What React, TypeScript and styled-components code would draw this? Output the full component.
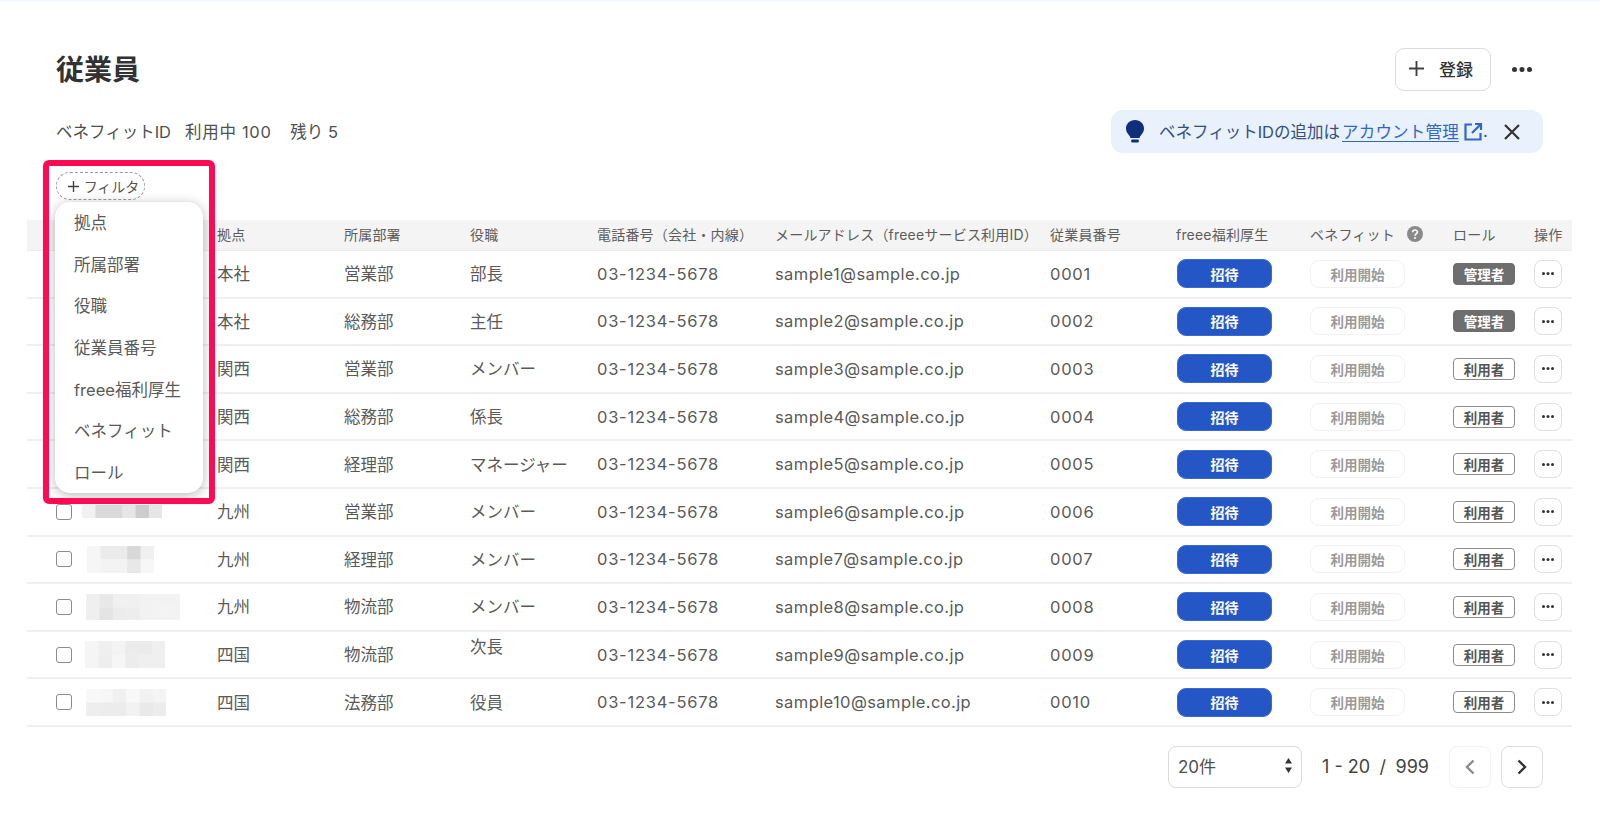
import styled, { createGlobalStyle } from 'styled-components';

const fontStack = '"Inter", "Noto Sans CJK JP", "Noto Sans", sans-serif';

const GlobalStyle = createGlobalStyle`
  html, body {
    margin: 0;
    background: #ffffff;
  }
  body {
    font-family: ${fontStack};
    color: #555555;
  }
`;

const Page = styled.div`
  position: relative;
  width: 1600px;
  height: 834px;
  box-sizing: border-box;
  overflow: hidden;
  border-top: 2px solid #f5f8fc;
`;
const Header = styled.header`
  height: 43px;
  margin-top: 46px;
  padding: 0 68px 0 56px;
  display: flex;
  align-items: center;
  justify-content: space-between;
`;
const Title = styled.h1`
  margin: 0;
  font-size: 28px;
  line-height: 42px;
  font-weight: 700;
  color: #323232;
`;
const HeaderActions = styled.div`
  display: flex;
  align-items: center;
  gap: 21px;
`;
const RegisterButton = styled.button`
  width: 96px;
  height: 43px;
  box-sizing: border-box;
  border: 1px solid #dcdcdc;
  border-radius: 9px;
  background: #ffffff;
  display: flex;
  align-items: center;
  justify-content: center;
  gap: 15px;
  padding: 0 4px 2px 0;
  font: 500 17px ${fontStack};
  color: #323232;
`;
const InfoRow = styled.div`
  margin-top: 19px;
  height: 43px;
  padding: 0 57px 0 56px;
  display: flex;
  align-items: center;
  justify-content: space-between;
`;
const Usage = styled.div`
  display: flex;
  gap: 14px;
  padding-bottom: 2px;
  font-size: 16.5px;
  color: #505050;
  white-space: pre;
`;
const UsageValue = styled.span`
  letter-spacing: 0.7px;
`;
const Banner = styled.div`
  width: 432px;
  height: 43px;
  box-sizing: border-box;
  padding-left: 14px;
  display: flex;
  align-items: center;
  border-radius: 12px;
  background: #e9f1fc;
  font-size: 16.5px;
  color: #34507f;
`;
const BannerText = styled.span`
  margin-left: 14px;
  padding-bottom: 2px;
  display: flex;
  align-items: center;
  white-space: nowrap;
`;
const BannerLink = styled.a`
  margin-left: 2px;
  letter-spacing: 0.2px;
  color: #2f66c8;
  text-decoration: underline;
  text-underline-offset: 3px;
`;
const FilterRow = styled.div`
  margin-top: 19px;
  height: 28px;
  padding-left: 56px;
  display: flex;
`;
const FilterChip = styled.button`
  width: 89px;
  height: 28px;
  box-sizing: border-box;
  padding: 0 0 0 6px;
  border: 1px dashed #9a9a9a;
  border-radius: 14px;
  background: #ffffff;
  display: flex;
  align-items: center;
  justify-content: center;
  gap: 5px;
  font: 400 14px ${fontStack};
  color: #555555;
`;
const Table = styled.div`
  margin: 20px 28px 0 27px;
`;
const columns = '190px 127px 126px 127px 178px 275px 126px 134px 143px 81px 38px';
const HeadRow = styled.div`
  height: 31px;
  padding-bottom: 2px;
  display: grid;
  grid-template-columns: ${columns};
  align-items: center;
  background: #f5f4f4;
  border-bottom: 1px solid #ececec;
  box-sizing: border-box;
  font-size: 14px;
  letter-spacing: 0.2px;
  color: #5c5c5c;
  white-space: nowrap;
`;
const HeadHelp = styled.span`
  display: flex;
  align-items: center;
  gap: 12px;
`;
const Row = styled.div`
  height: 47.6px;
  box-sizing: border-box;
  display: grid;
  grid-template-columns: ${columns};
  align-items: center;
  border-bottom: 2px solid #efefef;
  font-size: 16.5px;
  color: #5a5a5a;
  white-space: nowrap;
`;
const NameCell = styled.div`
  display: flex;
  align-items: center;
  padding-left: 29px;
`;
const Checkbox = styled.span`
  width: 16px;
  height: 16px;
  box-sizing: border-box;
  border: 1.5px solid #8a8a8a;
  border-radius: 3px;
  flex: none;
`;
const Mosaic = styled.svg<{ $left: number }>`
  margin-left: ${(p) => p.$left}px;
  display: block;
`;
const Cell = styled.span<{ $raised?: boolean }>`
  padding-bottom: 1px;
  ${(p) => p.$raised && 'margin-bottom: 17px;'}
`;
const LatinCell = styled.span<{ $track: number }>`
  letter-spacing: ${(p) => p.$track}px;
`;
const Invite = styled.button`
  width: 95px;
  height: 29px;
  margin-left: 1px;
  padding: 0;
  border: 1px solid #3a6bd2;
  border-radius: 9px;
  background: #2457c5;
  color: #ffffff;
  font: 700 14px ${fontStack};
`;
const StartUse = styled.button`
  width: 95px;
  height: 28px;
  padding: 0;
  border: 1px solid #f2f2f2;
  border-radius: 9px;
  background: #ffffff;
  color: #9a9a9a;
  font: 700 13.5px ${fontStack};
`;
const RoleBadge = styled.span<{ $admin: boolean }>`
  width: 62px;
  height: 22px;
  box-sizing: border-box;
  display: flex;
  align-items: center;
  justify-content: center;
  border-radius: 4px;
  border: 1px solid ${(p) => (p.$admin ? '#6e6e6e' : '#8c8c8c')};
  background: ${(p) => (p.$admin ? '#6e6e6e' : '#ffffff')};
  color: ${(p) => (p.$admin ? '#ffffff' : '#555555')};
  font-size: 13.5px;
  font-weight: 700;
`;
const MoreButton = styled.button`
  width: 28px;
  height: 28px;
  padding: 0;
  box-sizing: border-box;
  border: 1px solid #dfdfdf;
  border-radius: 8px;
  background: #ffffff;
  display: flex;
  align-items: center;
  justify-content: center;
`;
const Pager = styled.nav`
  margin-top: 19px;
  padding-right: 57px;
  display: flex;
  justify-content: flex-end;
  align-items: center;
`;
const PerPage = styled.div`
  width: 134px;
  height: 42px;
  box-sizing: border-box;
  padding: 0 9px 2px;
  display: flex;
  align-items: center;
  justify-content: space-between;
  border: 1px solid #dcdada;
  border-radius: 8px;
  font-size: 17px;
  color: #505050;
`;
const PageCount = styled.span`
  width: 107px;
  margin: 0 20px;
  display: flex;
  justify-content: space-between;
  font-size: 18px;
  color: #444444;
  white-space: pre;
`;
const PageButton = styled.button<{ $off?: boolean }>`
  width: 42px;
  height: 42px;
  padding: 0;
  margin-left: ${(p) => (p.$off ? 0 : 10)}px;
  box-sizing: border-box;
  border: 1px solid ${(p) => (p.$off ? '#f3f3f3' : '#dedede')};
  border-radius: 8px;
  background: #ffffff;
  display: flex;
  align-items: center;
  justify-content: center;
`;
const Highlight = styled.div`
  position: absolute;
  left: 43px;
  top: 158px;
  width: 172px;
  height: 344px;
  box-sizing: border-box;
  border: 6px solid #ff0a55;
  border-radius: 6px;
`;
const Menu = styled.ul`
  position: absolute;
  left: 55px;
  top: 200px;
  width: 148px;
  height: 291px;
  margin: 0;
  padding: 9px 0 8px;
  list-style: none;
  box-sizing: border-box;
  display: flex;
  flex-direction: column;
  justify-content: space-between;
  border-radius: 15px;
  background: #ffffff;
  box-shadow: 0 2px 12px rgba(0, 0, 0, 0.28);
`;
const MenuItem = styled.li`
  padding-left: 19px;
  font-size: 16.5px;
  line-height: 24px;
  color: #5a5a5a;
  white-space: nowrap;
`;

const Plus = ({ size, weight }: { size: number; weight: number }) => (
  <svg width={size} height={size} viewBox="0 0 16 16">
    <path d="M8 0v16M0 8h16" stroke="#404040" strokeWidth={weight} fill="none" />
  </svg>
);
const Dots = ({ width }: { width: number }) => (
  <svg width={width} height={width / 4} viewBox="0 0 16 4">
    <circle cx="2" cy="2" r="2" fill="#333333" />
    <circle cx="8" cy="2" r="2" fill="#333333" />
    <circle cx="14" cy="2" r="2" fill="#333333" />
  </svg>
);
const Bulb = () => (
  <svg width="20" height="25" viewBox="0 0 20 25">
    <path
      d="M10 1C4.8 1 1 4.8 1 9.6c0 3 1.4 5 3 6.6.8.8 1.3 1.7 1.4 2.8h9.2c.1-1.1.6-2 1.4-2.8 1.6-1.6 3-3.6 3-6.6C19 4.8 15.2 1 10 1z"
      fill="#0f2f7c"
    />
    <rect x="6.2" y="20.4" width="7.6" height="3" rx="1" fill="#0f2f7c" />
  </svg>
);
const ExternalLink = () => (
  <svg width="20" height="20" viewBox="0 0 20 20" style={{ marginLeft: 4, marginTop: 2 }}>
    <path
      d="M9 2.5H2.5v15h15V11M12 2h6v6M18 2L9 11"
      stroke="#2f66c8"
      strokeWidth="2.2"
      fill="none"
    />
  </svg>
);
const Close = () => (
  <svg width="18" height="18" viewBox="0 0 18 18" style={{ marginLeft: 15 }}>
    <path d="M2 2l14 14M16 2L2 16" stroke="#333333" strokeWidth="2.2" fill="none" />
  </svg>
);
const Help = () => (
  <svg width="16" height="16" viewBox="0 0 16 16">
    <circle cx="8" cy="8" r="8" fill="#8a8a8a" />
    <path
      d="M5.6 6.2C5.7 4.8 6.7 4 8 4s2.4.8 2.4 2.1c0 1.8-2.4 1.9-2.4 3.7"
      stroke="#ffffff"
      strokeWidth="1.6"
      fill="none"
    />
    <circle cx="8" cy="12" r="1" fill="#ffffff" />
  </svg>
);
const SelectArrows = () => (
  <svg width="7" height="15" viewBox="0 0 7 15">
    <path d="M3.5 0L7 5.5H0zM3.5 15L0 9.5h7z" fill="#333333" />
  </svg>
);
const Chevron = ({ left, color }: { left?: boolean; color: string }) => (
  <svg width="10" height="16" viewBox="0 0 10 16">
    <path
      d={left ? 'M8.5 1.5L2 8l6.5 6.5' : 'M1.5 1.5L8 8l-6.5 6.5'}
      stroke={color}
      strokeWidth="2.4"
      fill="none"
    />
  </svg>
);

type NameBlur = { left: number; cells: string[] };

const CELL = 13.4;
const NameMosaic = ({ left, cells }: NameBlur) => (
  <Mosaic
    $left={left}
    width={(cells[0].length * CELL) / 2}
    height={cells.length * CELL}
    viewBox={`0 0 ${(cells[0].length * CELL) / 2} ${cells.length * CELL}`}
  >
    {cells.map((line, y) =>
      line.match(/../g)!.map((c, x) => (
        <rect
          key={`${x}-${y}`}
          x={x * CELL}
          y={y * CELL}
          width={CELL + 0.4}
          height={CELL + 0.4}
          fill={`#${c}${c}${c}`}
        />
      )),
    )}
  </Mosaic>
);

const rows = [
  { place: '本社', dept: '営業部', title: '部長', role: '管理者' },
  { place: '本社', dept: '総務部', title: '主任', role: '管理者' },
  { place: '関西', dept: '営業部', title: 'メンバー', role: '利用者' },
  { place: '関西', dept: '総務部', title: '係長', role: '利用者' },
  { place: '関西', dept: '経理部', title: 'マネージャー', role: '利用者' },
  {
    place: '九州',
    dept: '営業部',
    title: 'メンバー',
    role: '利用者',
    name: { left: 10, cells: ['f1d9d9e6cde6'] },
  },
  {
    place: '九州',
    dept: '経理部',
    title: 'メンバー',
    role: '利用者',
    name: { left: 15, cells: ['f6ebebd8f0', 'f6f3f3e8f7'] },
  },
  {
    place: '九州',
    dept: '物流部',
    title: 'メンバー',
    role: '利用者',
    name: { left: 14, cells: ['efe8f0f0f2f2f2', 'efe4ecedf2f3f3'] },
  },
  {
    place: '四国',
    dept: '物流部',
    title: '次長',
    raised: true,
    role: '利用者',
    name: { left: 13, cells: ['f5eff3ebebef', 'f5eef6ecefef'] },
  },
  {
    place: '四国',
    dept: '法務部',
    title: '役員',
    role: '利用者',
    name: { left: 14, cells: ['f8f7f0f8f2f4', 'eeececf2e9ec'] },
  },
];

const filters = ['拠点', '所属部署', '役職', '従業員番号', 'freee福利厚生', 'ベネフィット', 'ロール'];

export default function App() {
  return (
    <Page>
      <GlobalStyle />
      <Header>
        <Title>従業員</Title>
        <HeaderActions>
          <RegisterButton>
            <Plus size={15} weight={2} />
            登録
          </RegisterButton>
          <Dots width={20} />
        </HeaderActions>
      </Header>
      <InfoRow>
        <Usage>
          <span>ベネフィットID</span>
          <UsageValue>利用中 100</UsageValue>
          <span> 残り 5</span>
        </Usage>
        <Banner>
          <Bulb />
          <BannerText>
            ベネフィットIDの追加は<BannerLink>アカウント管理</BannerLink>
            <ExternalLink />.
          </BannerText>
          <Close />
        </Banner>
      </InfoRow>
      <FilterRow>
        <FilterChip>
          <Plus size={11} weight={2} />
          フィルタ
        </FilterChip>
      </FilterRow>
      <Table>
        <HeadRow>
          <span />
          <span>拠点</span>
          <span>所属部署</span>
          <span>役職</span>
          <span>電話番号（会社・内線）</span>
          <span>メールアドレス（freeeサービス利用ID）</span>
          <span>従業員番号</span>
          <span>freee福利厚生</span>
          <HeadHelp>
            ベネフィット
            <Help />
          </HeadHelp>
          <span>ロール</span>
          <span>操作</span>
        </HeadRow>
        {rows.map((row, i) => {
          const no = i + 1;
          return (
            <Row key={no}>
              <NameCell>
                <Checkbox />
                {row.name && <NameMosaic {...row.name} />}
              </NameCell>
              <Cell>{row.place}</Cell>
              <Cell>{row.dept}</Cell>
              <Cell $raised={row.raised}>{row.title}</Cell>
              <LatinCell $track={0.75}>03-1234-5678</LatinCell>
              <LatinCell $track={0.4}>{`sample${no}@sample.co.jp`}</LatinCell>
              <LatinCell $track={0.75}>{String(no).padStart(4, '0')}</LatinCell>
              <Invite>招待</Invite>
              <StartUse>利用開始</StartUse>
              <RoleBadge $admin={row.role === '管理者'}>{row.role}</RoleBadge>
              <MoreButton>
                <Dots width={12} />
              </MoreButton>
            </Row>
          );
        })}
      </Table>
      <Pager>
        <PerPage>
          20件
          <SelectArrows />
        </PerPage>
        <PageCount>
          <span>1 - 20</span>
          <span>/</span>
          <span>999</span>
        </PageCount>
        <PageButton $off>
          <Chevron left color="#8c8c8c" />
        </PageButton>
        <PageButton>
          <Chevron color="#333333" />
        </PageButton>
      </Pager>
      <Menu>
        {filters.map((f) => (
          <MenuItem key={f}>{f}</MenuItem>
        ))}
      </Menu>
      <Highlight />
    </Page>
  );
}
